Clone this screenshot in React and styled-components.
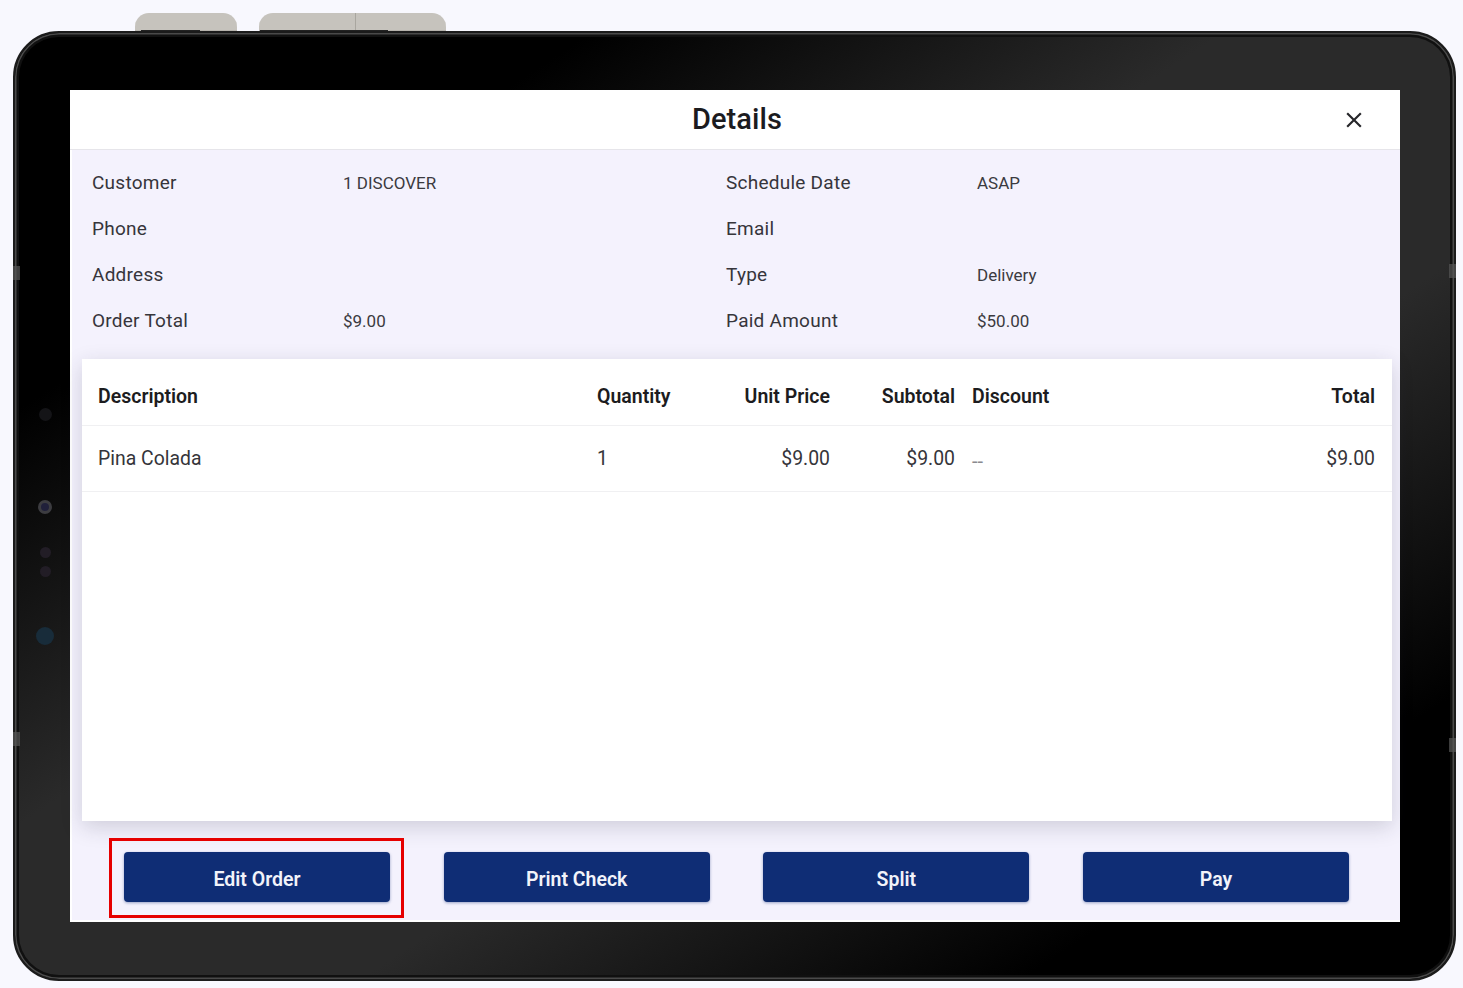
import React from 'react';
import styled, { createGlobalStyle } from 'styled-components';

const Global = createGlobalStyle`
  html, body {
    margin: 0;
    padding: 0;
    background: #f8f8fe;
    font-family: Roboto, "Liberation Sans", sans-serif;
  }
`;

const Page = styled.div`
  width: 1463px;
  height: 988px;
  padding: 13px 0 0 13px;
  box-sizing: border-box;
  overflow: hidden;
`;

const TopKeys = styled.div`
  display: flex;
  gap: 22px;
  height: 18px;
  padding-left: 122px;
`;

const TopKey = styled.div`
  position: relative;
  width: ${props => props.$width}px;
  border-radius: 14px 14px 0 0;
  background: #c6c3bd;
  box-shadow: inset 0 -1px 0 #b5b2ac;
  &::before {
    content: '';
    display: ${props => (props.$split ? 'block' : 'none')};
    position: absolute;
    top: 0;
    bottom: 0;
    left: 96px;
    width: 1px;
    background: #a9a69f;
  }
  &::after {
    content: '';
    position: absolute;
    bottom: 0;
    left: ${props => props.$shadeLeft}px;
    width: ${props => props.$shadeWidth}px;
    height: 1px;
    background: #222;
  }
`;

const Tablet = styled.div`
  position: relative;
  width: 1443px;
  height: 950px;
  box-sizing: border-box;
  padding: 57px 54px 57px 55px;
  border: 2px solid #1b1b1b;
  border-radius: 46px;
  background: linear-gradient(to bottom right, #000 20%, #2a2a2a 42%, #2a2a2a 62%, #000 85%);
  box-shadow: inset 0 0 0 1.5px #4a4a4a, inset 0 0 0 4px #101010;
`;

const SideKey = styled.span`
  position: absolute;
  top: ${props => props.$top}px;
  ${props => props.$side}: -2px;
  width: 7px;
  height: 14px;
  background: #555;
  opacity: 0.7;
`;

const Lens = styled.span`
  position: absolute;
  left: 23px;
  top: ${props => props.$top}px;
  width: ${props => props.$size}px;
  height: ${props => props.$size}px;
  margin-left: ${props => (14 - props.$size) / 2}px;
  border-radius: 50%;
  background: ${props => props.$color};
  border: ${props => (props.$ring ? '3px solid #3c3c40' : 'none')};
  box-sizing: border-box;
`;

const Screen = styled.div`
  display: flex;
  flex-direction: column;
  height: 832px;
  box-sizing: border-box;
  padding: 0 0 2px 2px;
  background: #fff;
`;

const Header = styled.header`
  display: grid;
  grid-template-columns: 1fr auto 1fr;
  align-items: center;
  height: 60px;
  flex: none;
  box-sizing: border-box;
  margin-left: -2px;
  padding: 0 33px 0 37px;
  background: #fff;
  border-bottom: 1.5px solid #e6e5ea;
`;

const Title = styled.h1`
  grid-column: 2;
  margin: 0 0 2px;
  font-size: 29px;
  font-weight: 500;
  letter-spacing: 0.1px;
  color: #1b1b1f;
`;

const Close = styled.button`
  grid-column: 3;
  justify-self: end;
  display: flex;
  padding: 0;
  border: 0;
  background: none;
  color: #26262a;
`;

const Body = styled.div`
  flex: 1;
  display: flex;
  flex-direction: column;
  min-height: 0;
  background: #f4f2fd;
`;

const Info = styled.div`
  display: grid;
  grid-template-columns: 251px 383px 251px 1fr;
  grid-auto-rows: 46px;
  align-items: center;
  height: 209px;
  flex: none;
  box-sizing: border-box;
  padding: 10px 0 0 20px;
`;

const Label = styled.div`
  margin-bottom: 2px;
  font-size: 19px;
  letter-spacing: 0.25px;
  color: #36353b;
`;

const Value = styled.div`
  font-size: 17px;
  color: #3b3a40;
`;

const Card = styled.section`
  height: 462px;
  flex: none;
  margin: 0 8px 0 10px;
  background: #fff;
  box-shadow: 0 6px 20px rgba(40, 40, 60, 0.18);
`;

const TableRow = styled.div`
  display: grid;
  grid-template-columns: 499px 110px 123px 125px 1fr 80px;
  align-items: center;
  height: ${props => props.$height}px;
  box-sizing: border-box;
  padding: ${props => (props.$head ? '8px' : '0')} 17px 0 16px;
  border-bottom: 1px solid #f0f0f2;
  color: ${props => (props.$head ? '#1c1c20' : '#35353a')};
  font-size: ${props => (props.$head ? '19.5px' : '19.4px')};
  font-weight: ${props => (props.$head ? 600 : 400)};
`;

const Cell = styled.div`
  text-align: ${props => (props.$right ? 'right' : 'left')};
  padding-left: ${props => (props.$discount ? '17px' : '0')};
`;

const Dash = styled.span`
  font-size: 20px;
  color: #8a8a8f;
  position: relative;
  top: 2px;
`;

const Actions = styled.div`
  display: flex;
  justify-content: space-between;
  align-items: flex-start;
  padding: 31px 51px 0 52px;
`;

const ActionWrap = styled.div`
  position: relative;
`;

const ActionButton = styled.button`
  display: block;
  width: 266px;
  height: 50px;
  padding: 5px 0 0;
  border: 0;
  border-radius: 4px;
  background: #0f2d75;
  box-shadow: 0 1px 3px rgba(15, 45, 117, 0.4);
  color: #f2f3fa;
  font-family: inherit;
  font-size: 19.5px;
  font-weight: 600;
`;

const Highlight = styled.div`
  position: absolute;
  top: -14px;
  left: -15px;
  right: -14px;
  bottom: -16px;
  border: 3px solid #e60000;
  pointer-events: none;
`;

const rows = [
  ['Customer', '1 DISCOVER', 'Schedule Date', 'ASAP'],
  ['Phone', '', 'Email', ''],
  ['Address', '', 'Type', 'Delivery'],
  ['Order Total', '$9.00', 'Paid Amount', '$50.00'],
];

export default function App() {
  return (
    <Page>
      <Global />
      <TopKeys>
        <TopKey $width={102} $shadeLeft={6} $shadeWidth={59} />
        <TopKey $width={187} $split $shadeLeft={1} $shadeWidth={128} />
      </TopKeys>
      <Tablet>
        <SideKey $side="left" $top={233} />
        <SideKey $side="left" $top={699} />
        <SideKey $side="right" $top={231} />
        <SideKey $side="right" $top={705} />
        <Lens $top={375} $size={13} $color="#141417" />
        <Lens $top={467} $size={14} $color="#20203a" $ring />
        <Lens $top={514} $size={11} $color="#221d26" />
        <Lens $top={533} $size={11} $color="#221d26" />
        <Lens $top={594} $size={18} $color="#182c3a" />
        <Screen>
          <Header>
            <Title>Details</Title>
            <Close aria-label="Close">
              <svg width="26" height="26" viewBox="0 0 24 24" fill="currentColor">
                <path d="M19 6.41 17.59 5 12 10.59 6.41 5 5 6.41 10.59 12 5 17.59 6.41 19 12 13.41 17.59 19 19 17.59 13.41 12z" />
              </svg>
            </Close>
          </Header>
          <Body>
            <Info>
              {rows.map(row => (
                <React.Fragment key={row[0]}>
                  <Label>{row[0]}</Label>
                  <Value>{row[1]}</Value>
                  <Label>{row[2]}</Label>
                  <Value>{row[3]}</Value>
                </React.Fragment>
              ))}
            </Info>
            <Card>
              <TableRow $head $height={67}>
                <Cell>Description</Cell>
                <Cell>Quantity</Cell>
                <Cell $right>Unit Price</Cell>
                <Cell $right>Subtotal</Cell>
                <Cell $discount>Discount</Cell>
                <Cell $right>Total</Cell>
              </TableRow>
              <TableRow $height={66}>
                <Cell>Pina Colada</Cell>
                <Cell>1</Cell>
                <Cell $right>$9.00</Cell>
                <Cell $right>$9.00</Cell>
                <Cell $discount><Dash>--</Dash></Cell>
                <Cell $right>$9.00</Cell>
              </TableRow>
            </Card>
            <Actions>
              <ActionWrap>
                <ActionButton>Edit Order</ActionButton>
                <Highlight />
              </ActionWrap>
              <ActionButton>Print Check</ActionButton>
              <ActionButton>Split</ActionButton>
              <ActionButton>Pay</ActionButton>
            </Actions>
          </Body>
        </Screen>
      </Tablet>
    </Page>
  );
}
